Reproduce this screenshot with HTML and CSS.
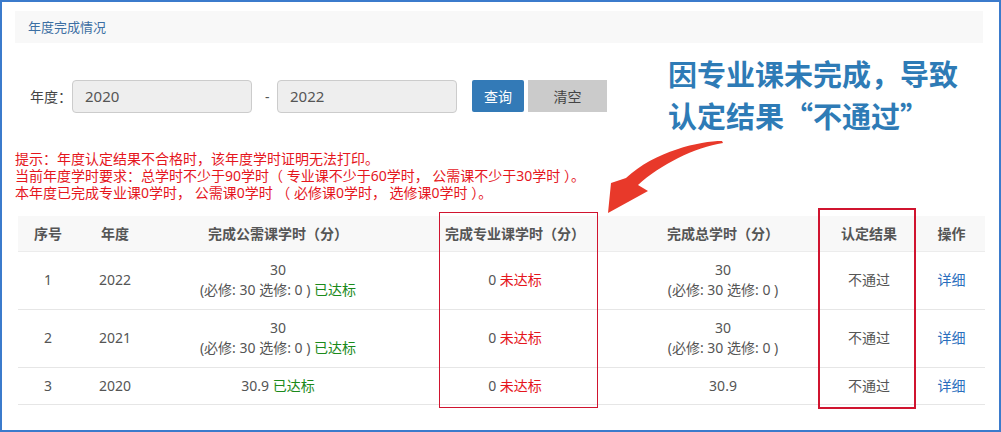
FILE: index.html
```html
<!DOCTYPE html>
<html lang="zh-CN">
<head>
    <meta charset="UTF-8">
    <title>年度完成情况</title>
    <link rel="stylesheet" href="styles.css">
</head>
<body>
    <div class="panel-title">年度完成情况</div>

    <div class="filter">
        <span class="filter-label">年度：</span>
        <input class="year-input" type="text" value="2020">
        <span class="dash">-</span>
        <input class="year-input" type="text" value="2022">
        <button class="btn btn-primary">查询</button>
        <button class="btn btn-grey">清空</button>
    </div>

    <div class="tips">
        <p>提示：年度认定结果不合格时，该年度学时证明无法打印。</p>
        <p>当前年度学时要求：总学时不少于90学时（ 专业课不少于60学时， 公需课不少于30学时 ）。</p>
        <p>本年度已完成专业课0学时， 公需课0学时 （ 必修课0学时， 选修课0学时 ）。</p>
    </div>

    <table class="result-table">
        <colgroup>
            <col style="width:60px">
            <col style="width:74px">
            <col style="width:252px">
            <col style="width:222px">
            <col style="width:194px">
            <col style="width:98px">
            <col style="width:67px">
        </colgroup>
        <thead>
            <tr>
                <th>序号</th>
                <th>年度</th>
                <th>完成公需课学时（分）</th>
                <th>完成专业课学时（分）</th>
                <th>完成总学时（分）</th>
                <th>认定结果</th>
                <th>操作</th>
            </tr>
        </thead>
        <tbody>
            <tr class="tall">
                <td>1</td>
                <td>2022</td>
                <td>30<br>(必修: 30 选修: 0 ) <span class="ok">已达标</span></td>
                <td>0 <span class="fail">未达标</span></td>
                <td>30<br>(必修: 30 选修: 0 )</td>
                <td>不通过</td>
                <td><a href="#" class="link">详细</a></td>
            </tr>
            <tr class="tall">
                <td>2</td>
                <td>2021</td>
                <td>30<br>(必修: 30 选修: 0 ) <span class="ok">已达标</span></td>
                <td>0 <span class="fail">未达标</span></td>
                <td>30<br>(必修: 30 选修: 0 )</td>
                <td>不通过</td>
                <td><a href="#" class="link">详细</a></td>
            </tr>
            <tr>
                <td>3</td>
                <td>2020</td>
                <td>30.9 <span class="ok">已达标</span></td>
                <td>0 <span class="fail">未达标</span></td>
                <td>30.9</td>
                <td>不通过</td>
                <td><a href="#" class="link">详细</a></td>
            </tr>
        </tbody>
    </table>

    <!-- annotations drawn over the page -->
    <div class="note">
        <div class="note-line">因专业课未完成，导致</div>
        <div class="note-line">认定结果“不通过”</div>
    </div>
    <svg class="arrow" width="1001" height="432" viewBox="0 0 1001 432">
        <path d="M722,141 C700,141 655,151 626,178 L611,183 L608,213 L648,191 L638,185 C660,165 695,147 723,143 Z" fill="#e8392a"/>
    </svg>
    <div class="mark mark-major"></div>
    <div class="mark mark-result"></div>
</body>
</html>
```

FILE: styles.css
```css
* {
    box-sizing: border-box;
}
html, body {
    height: 432px;
}
body {
    margin: 0;
    border: 2px solid #3b7bcc;
    padding: 9px 16px 0 13px;
    font-family: "Noto Sans", "Noto Sans CJK SC", sans-serif;
    font-size: 14px;
    color: #555;
    background: #fff;
    overflow: hidden;
}
.panel-title {
    height: 32px;
    line-height: 32px;
    padding-left: 13px;
    background: #f8f8f8;
    color: #3c6fa3;
    font-size: 13px;
}
.filter {
    display: flex;
    align-items: center;
    margin-top: 36px;
    padding-left: 15px;
    height: 34px;
}
.filter-label {
    width: 42px;
    color: #444;
    font-size: 14px;
}
.year-input {
    width: 180px;
    height: 33px;
    border: 1px solid #ccc;
    border-radius: 4px;
    background: #eee;
    padding: 0 12px;
    font-family: inherit;
    font-size: 15px;
    color: #555;
}
.dash {
    width: 25px;
    padding-left: 13px;
    color: #555;
}
.btn {
    height: 32px;
    border: none;
    font-family: inherit;
    font-size: 14px;
    cursor: pointer;
}
.btn-primary {
    margin-left: 15px;
    width: 52px;
    background: #337ab7;
    color: #fff;
    border-radius: 2px;
}
.btn-grey {
    margin-left: 4px;
    width: 79px;
    background: #cbcbcb;
    color: #444;
}
.tips {
    margin-top: 37px;
    color: #e5161d;
    font-size: 14px;
    line-height: 17px;
}
.tips p {
    margin: 0;
    white-space: nowrap;
}
.result-table {
    margin-top: 15px;
    margin-left: 3px;
    width: 967px;
    border-collapse: collapse;
    table-layout: fixed;
}
.result-table th {
    height: 35px;
    background: #f8f8f8;
    color: #555;
    font-weight: bold;
    font-size: 14px;
    border-bottom: 1px solid #ececec;
}
.result-table td {
    height: 37px;
    text-align: center;
    line-height: 20px;
    border-bottom: 1px solid #e6e6e6;
    color: #555;
    font-size: 14px;
}
.result-table tr.tall td {
    height: 58px;
}
.ok {
    color: #1b8a1b;
}
.fail {
    color: #e5161d;
}
.link {
    color: #2a6ebd;
    text-decoration: none;
}
.note {
    position: absolute;
    left: 668px;
    top: 52px;
    font-size: 29px;
    font-weight: bold;
    color: #2e7bb6;
    font-family: "Noto Sans CJK SC", sans-serif;
}
.note-line {
    height: 42px;
    line-height: 42px;
    white-space: nowrap;
}
.arrow {
    position: absolute;
    left: 0;
    top: 0;
    pointer-events: none;
}
.mark {
    position: absolute;
    border: 1px solid #d0142f;
}
.mark-major {
    left: 439px;
    top: 212px;
    width: 159px;
    height: 196px;
}
.mark-result {
    left: 818px;
    top: 208px;
    width: 98px;
    height: 201px;
    border-width: 2px;
}
```
